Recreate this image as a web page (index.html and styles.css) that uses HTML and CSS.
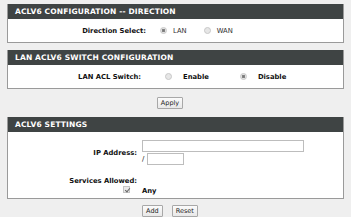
FILE: index.html
```html
<!DOCTYPE html>
<html lang="en">
<head>
  <meta charset="UTF-8">
  <title>ACLv6</title>
  <link rel="stylesheet" href="styles.css">
</head>
<body>
  <div class="section">
    <div class="section-head">ACLV6 CONFIGURATION -- DIRECTION</div>
    <div class="section-body row-dir">
      <span class="label">Direction Select:</span>
      <input type="radio" name="dir" class="radio" checked>
      <span class="opt">LAN</span>
      <input type="radio" name="dir" class="radio">
      <span class="opt">WAN</span>
    </div>
  </div>

  <div class="section gap">
    <div class="section-head">LAN ACLV6 SWITCH CONFIGURATION</div>
    <div class="section-body row-switch">
      <span class="label">LAN ACL Switch:</span>
      <input type="radio" name="sw" class="radio">
      <span class="opt bold">Enable</span>
      <input type="radio" name="sw" class="radio" checked>
      <span class="opt bold">Disable</span>
    </div>
  </div>

  <div class="buttons apply-row">
    <button class="btn">Apply</button>
  </div>

  <div class="section">
    <div class="section-head">ACLV6 SETTINGS</div>
    <div class="section-body settings">
      <span class="label ip-label">IP Address:</span>
      <div class="ip-fields">
        <input type="text" class="txt ip">
        <div class="prefix"><span class="slash">/</span><input type="text" class="txt plen"></div>
      </div>
      <span class="label svc-label">Services Allowed:</span>
      <span></span>
      <span class="chk-cell"><input type="checkbox" class="chk" checked></span>
      <span class="opt bold">Any</span>
    </div>
  </div>

  <div class="buttons add-row">
    <button class="btn">Add</button>
    <button class="btn">Reset</button>
  </div>
</body>
</html>
```

FILE: styles.css
```css
body {
  margin: 0;
  padding: 4px 7px 0 7px;
  background: #efefef;
  font-family: "DejaVu Sans", Verdana, sans-serif;
  font-size: 7px;
  color: #111;
}

.section { border: 1px solid #9a9a9a; border-top: none; background: #fff; }
.section.gap { margin-top: 7px; }

.section-head {
  background: #3f4444;
  color: #fff;
  font-weight: bold;
  font-size: 7.5px;
  letter-spacing: 0.15px;
  height: 15px;
  line-height: 15px;
  padding-left: 7px;
}

.section-body { display: flex; align-items: center; }
.row-dir { height: 23px; }
.row-switch { height: 23px; }

.label { font-weight: bold; font-size: 6.8px; text-align: right; }
.row-dir .label { width: 138px; margin-right: 14px; }
.row-switch .label { width: 133px; margin-right: 24px; }

.opt { font-size: 6.8px; }
.bold { font-weight: bold; }
.row-dir .opt { margin-right: 17px; color: #333; }
.row-dir .radio { margin-right: 6px; }
.row-switch .opt:nth-of-type(2) { margin-right: 31px; }

.radio {
  appearance: none;
  -webkit-appearance: none;
  margin: 0 5px 0 0;
  width: 7px;
  height: 7px;
  border-radius: 50%;
  border: 1px solid #c8c8c8;
  background: #e6e6e6;
}
.radio:checked { background: radial-gradient(circle, #777 0, #888 1.5px, #e2e2e2 2px); }
.row-switch .radio { margin-right: 11px; }

.buttons { display: flex; justify-content: center; align-items: center; gap: 9px; padding-right: 11px; }
.apply-row { height: 28px; }
.add-row { height: 20px; padding-top: 2px; }

.btn {
  font-family: "DejaVu Sans", Verdana, sans-serif;
  font-size: 6.5px;
  color: #222;
  height: 12px;
  padding: 0 3px;
  border: 1px solid #a8a8a8;
  border-radius: 1px;
  background: linear-gradient(#fbfbfb, #e8e8e8);
}

.settings {
  display: grid;
  grid-template-columns: 129px auto;
  column-gap: 5px;
  row-gap: 1px;
  align-items: center;
  padding: 8px 0 3px 0;
}
.ip-fields { display: flex; flex-direction: column; gap: 1px; }
.txt {
  box-sizing: border-box;
  border: 1px solid #bdbdbd;
  background: #fff;
  height: 12px;
  margin: 0;
  padding: 0;
}
.ip { width: 162px; }
.prefix { display: flex; align-items: center; }
.slash { font-size: 7px; width: 5px; }
.plen { width: 37px; }
.svc-label { margin-top: 11px; }
.chk-cell { text-align: right; padding-right: 7px; height: 9px; }
.chk {
  appearance: none;
  -webkit-appearance: none;
  width: 7px;
  height: 7px;
  margin: 0;
  border: 1px solid #c4c4c4;
  background: #e9e9e9;
  position: relative;
}
.chk:checked::after {
  content: "";
  position: absolute;
  left: 1.5px;
  top: 0;
  width: 2px;
  height: 4px;
  border: solid #666;
  border-width: 0 1px 1px 0;
  transform: rotate(40deg);
}
```
